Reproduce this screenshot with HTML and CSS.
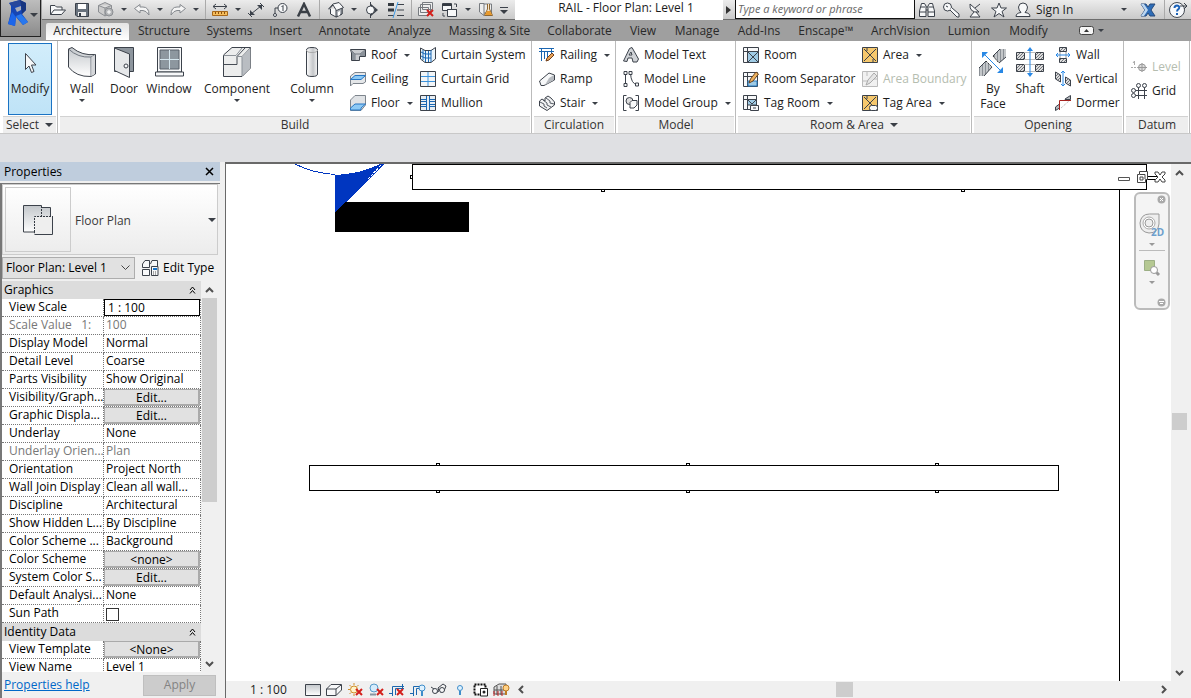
FILE: index.html
```html
<!DOCTYPE html>
<html lang="en">
<head>
<meta charset="utf-8">
<title>RAIL - Floor Plan: Level 1</title>
<link rel="stylesheet" href="styles.css">
</head>
<body>
<svg class="defs" aria-hidden="true">
  <defs>
    <linearGradient id="metal" x1="0" y1="0" x2="0" y2="1"><stop offset="0" stop-color="#c3c7cb"/><stop offset="1" stop-color="#fff"/></linearGradient>
    <linearGradient id="round" x1="0" y1="0" x2="1" y2="0"><stop offset="0" stop-color="#fff"/><stop offset=".6" stop-color="#c4c6c9"/><stop offset="1" stop-color="#f5f5f5"/></linearGradient>
    <pattern id="hatch" width="3" height="3" patternUnits="userSpaceOnUse"><rect width="3" height="3" fill="#ddd"/><path d="M0 3L3 0" stroke="#555b62" stroke-width=".8"/></pattern>
    <pattern id="bars" width="3" height="3" patternUnits="userSpaceOnUse"><rect width="3" height="3" fill="#c4c7ca"/><path d="M1.500 0V3" stroke="#8b9096"/></pattern>
  </defs>
</svg>

<header class="top">
  <button class="app-button" aria-label="Application menu">
    <svg width="28" height="30" viewBox="0 0 28 30"><path d="M3 3L14 0L20 3V10L16 14L22 22L17 25L10 17L9 26L2 24L5 12L5 6Z" fill="#1646b5"/><path d="M3 3L14 0L18 4L8 7Z" fill="#27479b"/><path d="M9 8L15 6V10L11 12Z" fill="#a9adb8"/><path d="M6 12L10 17L9 26L2 24Z" fill="#1c66ea"/><path d="M10 16L15 14L22 22L17 25Z" fill="#2878ee"/><path d="M14 0L20 3V10L16 14L15 5Z" fill="#17357f"/></svg>
    <i class="caret wide"></i>
  </button>
  <div class="title-bar">
    <div class="qat">
      <button class="tool" aria-label="Open"><svg width="18" height="16" viewBox="0 0 18 16"><path d="M1.500 12.500V3.500H6L7.500 5H13V8M1.500 12.500L5 8H16.500L12.500 12.500Z" class="ln fw"/></svg></button>
      <button class="tool" aria-label="Save"><svg width="16" height="16" viewBox="0 0 16 16"><path d="M1.500 1.500H14.500V14.500H3L1.500 13Z" fill="#68717c" class="ln"/><path d="M4 2H12V7H4Z" fill="#fff"/><path d="M4 10H12V14H4Z" fill="#eee"/><path d="M5 11H7V14H5Z" fill="#333b45"/></svg></button>
      <button class="tool" aria-label="Synchronize"><svg width="18" height="17" viewBox="0 0 18 17"><path d="M1.500 4.500L8 1.500L14.500 4.500V11L8 15L1.500 11ZM1.500 4.500L8 7L14.500 4.500M8 7V15" fill="#ccc" stroke="#8b8e92"/><circle cx="12" cy="11" r="4" fill="#b4b6b8" stroke="#8b8e92"/><path d="M10 11H14M12 9V13" stroke="#fff"/></svg></button>
      <button class="drop" aria-label="Synchronize options"><i class="caret"></i></button>
      <button class="tool" aria-label="Undo"><svg width="18" height="14" viewBox="0 0 18 14"><path d="M1.500 5.500L7 1.500V4H10Q16 4 16 12Q13 7.500 10 7.500H7V10Z" fill="#f4f4f4" stroke="#85898e"/></svg></button>
      <button class="drop" aria-label="Undo history"><i class="caret"></i></button>
      <button class="tool" aria-label="Redo"><svg width="18" height="14" viewBox="0 0 18 14"><path d="M16.500 5.500L11 1.500V4H8Q2 4 2 12Q5 7.500 8 7.500H11V10Z" fill="#f4f4f4" stroke="#85898e"/></svg></button>
      <button class="drop" aria-label="Redo history"><i class="caret"></i></button>
      <span class="sep"></span>
      <button class="tool" aria-label="Measure"><svg width="18" height="14" viewBox="0 0 18 14"><path d="M2 3.500H16M5 1L2 3.500L5 6M13 1L16 3.500L13 6" class="ln"/><path d="M1.500 8.500H16.500V12.500H1.500Z" fill="#f5bd5c" stroke="#a8681a"/><path d="M4.500 9V11M7.500 9V11M10.500 9V11M13.500 9V11" stroke="#8a5010"/></svg></button>
      <button class="drop" aria-label="Measure options"><i class="caret"></i></button>
      <button class="tool" aria-label="Aligned Dimension"><svg width="18" height="16" viewBox="0 0 18 16"><path d="M4 12L14 4" class="ln"/><path d="M3 8V13H8ZM10 3H15V8Z" fill="#3c424b"/><path d="M1 11L5 15M13 1L17 5" class="ln"/></svg></button>
      <button class="tool" aria-label="Tag by Category"><svg width="16" height="16" viewBox="0 0 16 16"><path d="M7 6H3V12" class="ln"/><circle cx="3" cy="13" r="1.500" class="ln fw"/><circle cx="10.500" cy="6" r="4.500" class="ln fw"/><path d="M9.500 5L11 3.500V9" class="ln"/></svg></button>
      <button class="tool" aria-label="Text"><svg width="16" height="16" viewBox="0 0 16 16"><path d="M2 14.500L8 2L14 14.500M5 10H11" fill="none" stroke="#3a3f46" stroke-width="2.500"/></svg></button>
      <span class="sep gap"></span>
      <button class="tool" aria-label="Default 3D View"><svg width="16" height="16" viewBox="0 0 16 16"><path d="M2.500 7V12L8 15L14 12V6" class="ln fw"/><path d="M8 8V15L14 12V5.500Z" fill="#aeb2b8" class="ln"/><path d="M.5 7L5 2L11 .5L15.500 5.500L8.500 8.500L5 3L1 7.500" class="ln fw"/><path d="M10 10L12 9V13L10 14Z" fill="#fff"/></svg></button>
      <button class="drop" aria-label="3D options"><i class="caret"></i></button>
      <button class="tool" aria-label="Section"><svg width="16" height="16" viewBox="0 0 16 16"><path d="M7 2L14 8L7 14Z" fill="#3d434b"/><circle cx="6.500" cy="8" r="4" class="ln fw"/><path d="M6.500 0V4M6.500 12V16" class="ln"/></svg></button>
      <button class="tool" aria-label="Thin Lines"><svg width="18" height="16" viewBox="0 0 18 16"><path d="M1 2.500H7M1 8H7" stroke="#333940" stroke-width="3"/><path d="M1 13.500H7M10 2.500H17M10 8H17M10 13.500H17" class="ln"/><path d="M6 16L11 0" stroke="#3c9be8"/></svg></button>
      <span class="sep"></span>
      <button class="tool" aria-label="Close Hidden Windows"><svg width="18" height="17" viewBox="0 0 18 17"><path d="M5.500 1.500H15.500V8.500H5.500ZM3.500 3.500H13.500V11.500H3.500ZM1.500 6.500H11.500V14.500H1.500Z" fill="#eee" stroke="#777b80"/><path d="M10 9L16 15M16 9L10 15" class="redx"/></svg></button>
      <button class="tool" aria-label="Switch Windows"><svg width="18" height="16" viewBox="0 0 18 16"><path d="M1.500 1.500H10.500V8.500H1.500Z" class="ln fw"/><path d="M1 3H11M6 8H16" stroke="#343a42" stroke-width="2"/><path d="M6.500 7.500H15.500V14.500H6.500ZM13 2H15.500V5M2 11V14H4" class="ln fw"/></svg></button>
      <button class="drop" aria-label="Switch list"><i class="caret"></i></button>
      <button class="tool" aria-label="User Interface"><svg width="18" height="16" viewBox="0 0 18 16"><path d="M2.500 1.500H7V13.500L2.500 10ZM7 2H14.500V11H7" fill="#eee" stroke="#777b80"/><path d="M10.500 2V7L7.500 13.500H15.500L12.500 7V2" fill="#f6e6cc" stroke="#8d6530"/><path d="M10 9H13L15 13H8Z" fill="#e99a2c"/></svg></button>
      <button class="drop" aria-label="Customize toolbar"><svg width="8" height="8" viewBox="0 0 8 8"><path d="M0 1.500H8" class="ln"/><path d="M0 4H8L4 8Z" fill="#3a3f46"/></svg></button>
    </div>
    <h1 class="doc-title">RAIL - Floor Plan: Level 1</h1>
    <button class="search-toggle" aria-label="Collapse search"><i class="caret side"></i></button>
    <input class="search" type="text" aria-label="Search" placeholder="Type a keyword or phrase">
    <div class="info">
      <button class="tool" aria-label="Search help"><svg width="18" height="16" viewBox="0 0 18 16"><path d="M3.500 1.500H6.500L8 4V14.500H1.500V9ZM14.500 1.500H11.500L10 4V14.500H16.500V9ZM8 5H10M8 8H10M1.500 10H8M10 10H16.500M3 5H7M11 5H15" class="ln fw"/></svg></button>
      <button class="tool" aria-label="Subscription"><svg width="18" height="16" viewBox="0 0 18 16"><circle cx="5.500" cy="5" r="4" class="ln fw"/><path d="M8 8L15 15H17V12L9.500 5.500M4 4L6 5" class="ln fw"/></svg></button>
      <button class="tool" aria-label="Communication Center"><svg width="16" height="16" viewBox="0 0 16 16"><path d="M3 2Q2 11 12 10ZM8 6L13 2M7 10L3 15H13L9 10" class="ln fw"/></svg></button>
      <button class="tool" aria-label="Favorites"><svg width="16" height="16" viewBox="0 0 16 16"><path d="M8 1L10 6H15.500L11 9.500L13 15L8 11.500L3 15L5 9.500L.5 6H6Z" class="ln fw"/></svg></button>
      <button class="tool" aria-label="Account"><svg width="16" height="16" viewBox="0 0 16 16"><path d="M1 14.500Q1 11 6 10.500Q3.500 8 3.500 5Q4 1 8 1Q12 1 12.500 5Q12.500 8 10 10.500Q15 11 15 14.500Z" class="ln fw"/></svg></button>
      <button class="sign-in">Sign In</button>
    </div>
    <div class="info end">
      <button class="drop" aria-label="Account options"><i class="caret"></i></button>
      <button class="tool" aria-label="Exchange"><svg width="16" height="14" viewBox="0 0 16 14"><path d="M1 1H6L8 4L10 1H15L11 7L15 13H10L8 10L6 13H1L5 7Z" fill="#2e6db8" stroke="#284b7a"/><path d="M1 1H4L8 7L4 13H1L5 7Z" fill="#bcd6f0"/></svg></button>
      <span class="sep"></span>
      <button class="tool" aria-label="Help"><svg width="20" height="18" viewBox="0 0 20 18"><circle cx="9" cy="9" r="7.500" fill="#f7f9fc" stroke="#454b53"/><path d="M6.500 7Q6.500 4.500 9 4.500Q12 5 11 7.500Q9 9 9 10.500M9 12V14" fill="none" stroke="#1b62b8" stroke-width="2"/><path d="M12 5H19M16 2L19 5L16 8" class="ln"/></svg></button>
    </div>
  </div>
  <nav class="tabs" aria-label="Ribbon tabs">
    <button class="tab active">Architecture</button><button class="tab">Structure</button><button class="tab">Systems</button><button class="tab">Insert</button><button class="tab">Annotate</button><button class="tab">Analyze</button><button class="tab">Massing &amp; Site</button><button class="tab">Collaborate</button><button class="tab">View</button><button class="tab">Manage</button><button class="tab">Add-Ins</button><button class="tab">Enscape™</button><button class="tab">ArchVision</button><button class="tab">Lumion</button><button class="tab">Modify</button>
    <button class="minimize" aria-label="Minimize ribbon"><svg width="15" height="9" viewBox="0 0 15 9"><rect x=".5" y=".5" width="14" height="8" rx="2" fill="#f5f5f5" stroke="#444"/><path d="M5 6H10L7.500 3Z" fill="#333"/></svg><i class="caret"></i></button>
  </nav>
</header>

<section class="ribbon" aria-label="Architecture tools">
  <div class="panel p-select">
    <div class="body"><button class="big pressed"><svg width="20" height="30" viewBox="0 0 20 30"><path d="M5.500 5V21L9 17.500L11.500 24L14 23L11.500 16.500H16Z" class="ln fw"/></svg><span>Modify</span></button></div>
    <button class="foot">Select <i class="caret wide"></i></button>
  </div>
  <div class="panel p-build">
    <div class="body">
      <button class="big"><svg width="30" height="34" viewBox="0 0 30 34"><path d="M1.500 3L5 1.500Q15 10 28.500 8.500V28L24 30.500Q9 31 1.500 21Z" class="ln" fill="url(#metal)"/><path d="M1.500 3Q11 12 24 11L28.500 8.500M24 11V30.500" fill="none" stroke="#717780"/><path d="M24.500 11L28 9V28L24.500 30Z" fill="#d5d7da"/></svg><span>Wall</span><i class="caret"></i></button>
      <button class="big"><svg width="22" height="34" viewBox="0 0 22 34"><path d="M1.500 1.500H20.500V25.500H1.500Z" class="ln" fill="#8d959d"/><path d="M1.500 2L16.500 8V31.500L1.500 24.500Z" class="ln" fill="#e6e8ea"/><circle cx="13" cy="20" r="2" class="ln fw"/></svg><span>Door</span></button>
      <button class="big"><svg width="30" height="34" viewBox="0 0 30 34"><path d="M3.500 1.500H27.500V26H3.500Z" class="ln fw"/><path d="M6 4H25V23H6Z" fill="#8d979f" stroke="#59616a"/><path d="M15.500 4V23M6 13.500H25" stroke="#d5e6ee"/><path d="M1.500 26H29.500V30H1.500Z" class="ln fw"/></svg><span>Window</span></button>
      <button class="big"><svg width="30" height="34" viewBox="0 0 30 34"><path d="M1.500 9L10 1.500H28.500V22L20 30.500H1.500Z" class="ln" fill="#eceded"/><path d="M20 11L28.500 2V22L20 30Z" fill="#b9bdc2"/><path d="M1.500 22V18.500H15V10.500L23 2" fill="none" stroke="#464c55"/><path d="M1.500 9.500H14L20 2M15 10.500H20M20 10.500V30M20 10.500L28 2" fill="none" stroke="#8c9299"/></svg><span>Component</span><i class="caret"></i></button>
      <button class="big"><svg width="14" height="34" viewBox="0 0 14 34"><path d="M1.500 4Q1.500 1.500 7 1.500Q12.500 1.500 12.500 4V28Q12.500 30.500 7 30.500Q1.500 30.500 1.500 28Z" class="ln" fill="url(#round)"/><path d="M1.500 4Q1.500 6.500 7 6.500Q12.500 6.500 12.500 4" fill="none" stroke="#aaa"/></svg><span>Column</span><i class="caret"></i></button>
      <div class="stack">
        <button class="small"><svg class="ic" viewBox="0 0 16 16"><path d="M.5 2.500H15.500V9.500H9.500V13.500H1.500V6Z" fill="#c9ccd0" class="ln"/><path d="M1 3L5 7V13M5 7H10L15 3" fill="none" stroke="#737981"/><path d="M1 3L5 7V13H2V6ZM10 7L15 3V9H10Z" fill="#8b929a"/></svg>Roof<i class="caret"></i></button>
        <button class="small"><svg class="ic" viewBox="0 0 16 16"><path d="M.5 5L5 1.500H15.500V11L13 12.500H3L.5 15Z" fill="#e4e6e8" stroke="#7d848c"/><path d="M.5 8.500L5 4.500H15.500L11 8.500Z" fill="#8cc9f5" stroke="#2676c3"/></svg>Ceiling</button>
        <button class="small"><svg class="ic" viewBox="0 0 16 16"><path d="M.5 11V5L5 .5H15.500V10L11 15.500H.5Z" fill="#dfe2e5" stroke="#7d848c"/><path d="M.5 13L5 9H15.500L11 13V15H.5Z" fill="#8cc9f5" stroke="#2676c3"/></svg>Floor<i class="caret"></i></button>
      </div>
      <div class="stack">
        <button class="small"><svg class="ic" viewBox="0 0 16 16"><path d="M.5 1L5 3.500H11L15.500 .5V12L11 15.500H5L.5 12Z" fill="#eaf4fb" class="ln"/><path d="M1 5L5 7H11M1 9L5 11H11M3 3V13M5.500 4V15M8.500 4V15M11 3V15" fill="none" stroke="#1967b4"/></svg>Curtain System</button>
        <button class="small"><svg class="ic" viewBox="0 0 16 16"><path d="M.5 .5H15.500V15.500H.5Z" fill="#f3f5f7" class="ln"/><path d="M8 1V15M1 5.500H15M1 10.500H15" stroke="#3c93dc"/></svg>Curtain Grid</button>
        <button class="small"><svg class="ic" viewBox="0 0 16 16"><path d="M.5 .5H15.500V15.500H.5Z" fill="#e7edf2" class="ln"/><path d="M6.500 1V15M9.500 1V15M1 4.500H6M10 4.500H15M1 6.500H6M10 6.500H15M1 9.500H6M10 9.500H15M1 11.500H6M10 11.500H15" stroke="#1967b4"/></svg>Mullion</button>
      </div>
    </div>
    <div class="foot">Build</div>
  </div>
  <div class="panel p-circ">
    <div class="body"><div class="stack">
      <button class="small"><svg class="ic" viewBox="0 0 16 16"><path d="M0 1.500H15M0 4.500H15M2.500 2V14M5.500 5V12M8.500 5V12M12.500 2V10" fill="none" stroke="#1b66b1"/><path d="M7 14L8 11L13 6L15 8L10 13Z" fill="#e8a258" stroke="#71401c"/></svg>Railing<i class="caret"></i></button>
      <button class="small"><svg class="ic" viewBox="0 0 16 16"><path d="M.5 10L10 2L15.500 4V9L5 14.500H2Z" class="ln fw"/><path d="M10 7L15 4V9L6 14Z" fill="#b7bbc0"/></svg>Ramp</button>
      <button class="small"><svg class="ic" viewBox="0 0 16 16"><path d="M.5 6L3 4L6 6L6 3L9 1L12 3L15.500 7V10L8 15.500L.5 11Z" fill="#f1f2f3" class="ln"/><path d="M1 7L5 9V11L8 13M4 5L8 8V10L12 12M7 3L11 6V8L15 9" fill="none" stroke="#555b64"/></svg>Stair<i class="caret"></i></button>
    </div></div>
    <div class="foot">Circulation</div>
  </div>
  <div class="panel p-model">
    <div class="body"><div class="stack">
      <button class="small"><svg class="ic" viewBox="0 0 16 16"><path d="M.5 14L6.500 1.500L9 .5L15.500 12L14 15H10L9 11H5L4 14.500ZM6 8H9L8 5Z" fill="#cfd2d6" class="ln"/></svg>Model Text</button>
      <button class="small"><svg class="ic" viewBox="0 0 16 16"><path d="M2.500 2V14M7.500 2Q8 13 14 13.500" class="ln"/><path d="M1 .5H4V3.500H1ZM1 12.500H4V15.500H1ZM6 .5H9V3.500H6ZM12.500 12H15.500V15H12.500Z" class="ln fw"/></svg>Model Line</button>
      <button class="small"><svg class="ic" viewBox="0 0 16 16"><path d="M3.500 .5H.5V15.500H3.500M12.500 .5H15.500V15.500H12.500" class="ln"/><circle cx="6.500" cy="6" r="3.500" class="ln" fill="#ddd"/><path d="M7 7.500L9 5.500H14V10L11 13H7Z" class="ln fw"/></svg>Model Group<i class="caret"></i></button>
    </div></div>
    <div class="foot">Model</div>
  </div>
  <div class="panel p-room">
    <div class="body">
      <div class="stack">
        <button class="small"><svg class="ic" viewBox="0 0 16 16"><path d="M.5 .5H15.500V15.500H.5ZM4.500 1V15M1 4.500H4" class="ln fw"/><path d="M4.500 4.500H15.500V15.500H4.500Z" fill="#9fcbe5" class="ln"/><path d="M5 5L15 15M15 5L5 15" class="ln"/></svg>Room</button>
        <button class="small"><svg class="ic" viewBox="0 0 16 16"><path d="M.5 1.500H14.500V15.500H.5ZM4.500 2V15M1 5.500H14" class="ln fw"/><path d="M5 10H14V15H5Z" fill="#9fcbe5" stroke="#2377bd"/><path d="M6 12L7.500 8L13 1L15.500 3L10 10Z" fill="#efb35f" stroke="#68431f"/></svg>Room Separator</button>
        <button class="small"><svg class="ic" viewBox="0 0 16 16"><path d="M.5 .5H13.500V14.500H.5ZM4.500 1V15M1 4.500H4" class="ln fw"/><path d="M4.500 4.500H13.500V10H4.500Z" fill="#9fcbe5" class="ln"/><path d="M5 5L9 9M13 5L9 9" class="ln"/><path d="M7.500 10.500H15.500V15.500H7.500ZM10 13H13" class="ln fw"/></svg>Tag Room<i class="caret"></i></button>
      </div>
      <div class="stack">
        <button class="small"><svg class="ic" viewBox="0 0 16 16"><path d="M.5 .5H15.500V15.500H.5Z" fill="#f6c86d" class="ln"/><path d="M2 2L14 14M14 2L2 14M5 1V4M11 12V15" class="ln"/></svg>Area<i class="caret"></i></button>
        <button class="small" disabled><svg class="ic" viewBox="0 0 16 16"><path d="M.5 .5H15.500V15.500H.5ZM1 10H7M10 8H15M5 1V5" fill="#f1f1f1" stroke="#bbb"/><path d="M4 14L6 9L12 2L15 5L8 12Z" fill="#e5e5e5" stroke="#aaa"/></svg>Area Boundary</button>
        <button class="small"><svg class="ic" viewBox="0 0 16 16"><path d="M.5 .5H15.500V15.500H.5Z" fill="#f6c86d" class="ln"/><path d="M2 2L12 12M14 2L2 14M5 1V4" class="ln"/><rect x="7.500" y="10.500" width="8" height="5" rx="2" class="ln fw"/></svg>Tag Area<i class="caret"></i></button>
      </div>
    </div>
    <button class="foot">Room &amp; Area <i class="caret wide"></i></button>
  </div>
  <div class="panel p-open">
    <div class="body">
      <button class="big two"><svg width="30" height="34" viewBox="0 0 30 34"><path d="M15 10L22 3H28V11L21 17ZM1 22L8 15L14 21L6 30H1Z" fill="url(#bars)"/><path d="M15 10L22 3M28 11L21 17M1 22L8 15M14 21L6 30" class="ln"/><path d="M15 10L21 17M8 15L14 21" stroke="#333" stroke-dasharray="2 1"/><path d="M6 8L23 25" stroke="#2888e5"/><path d="M4 6H10L4 12ZM25 27H19L25 21Z" fill="#2888e5"/></svg><span>By<br>Face</span></button>
      <button class="big"><svg width="30" height="34" viewBox="0 0 30 34"><path d="M1.500 6.500H9.500V13.500H1.500ZM20.500 6.500H28.500V13.500H20.500ZM1.500 18.500H9.500V25.500H1.500ZM20.500 18.500H28.500V25.500H20.500Z" fill="url(#hatch)" class="ln"/><path d="M9 6.500H21M9 13.500H21M9 18.500H21M9 25.500H21" stroke="#bbb"/><path d="M15 4V28" stroke="#2888e5"/><path d="M12 5L15 1L18 5ZM12 27L15 31L18 27Z" fill="#2888e5"/></svg><span>Shaft</span></button>
      <div class="stack">
        <button class="small"><svg class="ic" viewBox="0 0 16 16"><path d="M4.500 .5H11.500V4.500H4.500ZM4.500 11.500H11.500V15.500H4.500Z" fill="url(#hatch)" class="ln"/><path d="M5 5V11M11 5V11" stroke="#999"/><path d="M1 8H15M3 6L1 8L3 10M13 6L15 8L13 10" fill="none" stroke="#2888e5"/></svg>Wall</button>
        <button class="small"><svg class="ic" viewBox="0 0 16 16"><path d="M.5 1L5.500 4V11L.5 8ZM10.500 6L15.500 9V15L10.500 12Z" fill="url(#hatch)" class="ln"/><path d="M8 0V15M6 2L8 0L10 2M6 13L8 15L10 13" fill="none" stroke="#2888e5"/></svg>Vertical</button>
        <button class="small"><svg class="ic" viewBox="0 0 16 16"><path d="M.5 12L4.500 9V13L.5 15.500ZM10 4L15.500 .5V4.500H10Z" fill="#b5b9be" class="ln"/><path d="M4.500 15V5.500H16" fill="none" stroke="#a52320"/><path d="M6 13L14 6" stroke="#aaa" stroke-dasharray="1 1"/></svg>Dormer</button>
      </div>
    </div>
    <div class="foot">Opening</div>
  </div>
  <div class="panel p-datum">
    <div class="body"><div class="stack">
      <button class="small" disabled><svg class="ic" viewBox="0 0 16 16"><path d="M0 8.500H7" stroke="#aaa" stroke-dasharray="2 1"/><path d="M2 4L3.500 2V6" fill="none" stroke="#aaa"/><circle cx="11" cy="8.500" r="3.500" fill="#ddd" stroke="#999"/><path d="M11 4V13M7 8.500H16" stroke="#999"/></svg>Level</button>
      <button class="small"><svg class="ic" viewBox="0 0 16 16"><path d="M4 7.500H16M4 12.500H16M7.500 4V16M13.500 4V16" class="ln"/><circle cx="7.500" cy="2.500" r="2" class="ln fw"/><circle cx="13.500" cy="2.500" r="2" class="ln fw"/><circle cx="2.500" cy="7.500" r="2" class="ln fw"/><circle cx="2.500" cy="12.500" r="2" class="ln fw"/></svg>Grid</button>
    </div></div>
    <div class="foot">Datum</div>
  </div>
</section>

<main class="workspace">
  <aside class="properties">
    <header class="prop-head"><h2>Properties</h2><button aria-label="Close properties"><svg width="9" height="9" viewBox="0 0 9 9"><path d="M1 1L8 8M8 1L1 8" stroke="#000" stroke-width="1.500"/></svg></button></header>
    <div class="prop-body">
      <button class="type-selector">
        <span class="thumb"><svg width="32" height="32" viewBox="0 0 32 32"><path d="M1.500 1.500H19.500V3.500H28.500V29H12.500V28H1.500Z" fill="url(#metal)" class="ln"/><path d="M13 13H30V30H13Z" fill="#eee"/><path d="M19.500 2V12.500M12.500 28V12.500H29" fill="none" stroke="#343a42" stroke-dasharray="2 1"/><path d="M12.500 30.500H30.500V12" class="ln"/></svg></span>
        <span class="type-name">Floor Plan</span><i class="caret wide"></i>
      </button>
      <div class="instance">
        <select aria-label="Instance"><option>Floor Plan: Level 1</option></select>
        <button class="edit-type"><svg width="17" height="16" viewBox="0 0 17 16"><path d="M.5 4L3 .5H7.500V7.500H.5ZM8.500 4L10 .5H15.500V6M.5 9.500H7.500V15.500H.5ZM9.500 6.500H16V15.500H9.500Z" class="ln fw"/><path d="M11 8H15V10H11Z" fill="#1773c8"/><path d="M11 12H15M11 14H15" stroke="#555" stroke-dasharray="1 1"/></svg>Edit Type</button>
      </div>
      <div class="grid-area">
        <div class="table-clip">
        <table>
          <colgroup><col class="name-col"><col></colgroup>
          <tbody>
          <tr class="group"><th colspan="2"><div>Graphics<svg width="7" height="8" viewBox="0 0 7 8"><path d="M1 4L3.500 1L6 4M1 7.500L3.500 4.500L6 7.500" fill="none" stroke="#000"/></svg></div></th></tr>
          <tr><th><label for="scale">View Scale</label></th><td class="flush"><input id="scale" type="text" value="1 : 100"></td></tr>
          <tr class="dim"><th>Scale Value &nbsp; 1:</th><td>100</td></tr>
          <tr><th>Display Model</th><td>Normal</td></tr>
          <tr><th>Detail Level</th><td>Coarse</td></tr>
          <tr><th>Parts Visibility</th><td>Show Original</td></tr>
          <tr><th>Visibility/Graph...</th><td class="flush"><button>Edit...</button></td></tr>
          <tr><th>Graphic Displa...</th><td class="flush"><button>Edit...</button></td></tr>
          <tr><th>Underlay</th><td>None</td></tr>
          <tr class="dim"><th>Underlay Orien...</th><td>Plan</td></tr>
          <tr><th>Orientation</th><td>Project North</td></tr>
          <tr><th>Wall Join Display</th><td>Clean all wall...</td></tr>
          <tr><th>Discipline</th><td>Architectural</td></tr>
          <tr><th>Show Hidden L...</th><td>By Discipline</td></tr>
          <tr><th>Color Scheme ...</th><td>Background</td></tr>
          <tr><th>Color Scheme</th><td class="flush"><button>&lt;none&gt;</button></td></tr>
          <tr><th>System Color S...</th><td class="flush"><button>Edit...</button></td></tr>
          <tr><th>Default Analysi...</th><td>None</td></tr>
          <tr><th><label for="sun">Sun Path</label></th><td class="flush"><input id="sun" type="checkbox"></td></tr>
          <tr class="group"><th colspan="2"><div>Identity Data<svg width="7" height="8" viewBox="0 0 7 8"><path d="M1 4L3.500 1L6 4M1 7.500L3.500 4.500L6 7.500" fill="none" stroke="#000"/></svg></div></th></tr>
          <tr><th>View Template</th><td class="flush"><button>&lt;None&gt;</button></td></tr>
          <tr><th>View Name</th><td>Level 1</td></tr>
          </tbody>
        </table>
        </div>
        <div class="vscroll"><svg width="9" height="6" viewBox="0 0 9 6"><path d="M1 5L4.500 1.500L8 5" class="chev"/></svg><div class="track"><span class="prop-thumb"></span></div><svg width="9" height="6" viewBox="0 0 9 6"><path d="M1 1L4.500 4.500L8 1" class="chev"/></svg></div>
      </div>
      <footer class="prop-foot"><a href="#help">Properties help</a><button disabled>Apply</button></footer>
    </div>
  </aside>

  <section class="view" aria-label="Floor plan view">
    <div class="canvas">
      <svg class="drawing" shape-rendering="crispEdges">
        <rect x="109" y="38" width="134" height="30"/>
        <path d="M109 11Q134 10 154 0H158L120 38L109 48Z" fill="#0036c0"/>
        <path d="M69 0Q86 9 109 10.500" fill="none" stroke="#0036c0"/>
        <path d="M142 15L156 0" fill="none" stroke="#fff" stroke-dasharray="3 1"/>
        <g fill="#fff" stroke="#000">
          <path d="M893.500 25V520" />
          <rect x="186.500" y=".5" width="734" height="25"/>
          <rect x="83.500" y="301.500" width="749" height="25"/>
          <path d="M184.500 11.500H186.500V14.500H184.500ZM375.500 25.500H378.500V27.500H375.500ZM735.500 25.500H738.500V27.500H735.500Z"/>
          <path d="M210.500 299.500H213.500V301.500H210.500ZM460.500 299.500H463.500V301.500H460.500ZM709.500 299.500H712.500V301.500H709.500ZM210.500 326.500H213.500V328.500H210.500ZM460.500 326.500H463.500V328.500H460.500ZM709.500 326.500H712.500V328.500H709.500Z"/>
          <path d="M921 12.500H931V15.500H921Z"/>
        </g>
      </svg>
      <div class="window-buttons">
        <button aria-label="Minimize view"><svg width="12" height="14" viewBox="0 0 12 14"><path d="M.5 7.500H11.500V10.500H.5Z" fill="#fff" stroke="#555"/></svg></button>
        <button aria-label="Restore view"><svg width="12" height="14" viewBox="0 0 12 14"><path d="M3.500 1.500H11.500V9.500H9.500V12.500H1.500V4.500H3.500Z" fill="#fff" stroke="#444"/><path d="M4 7H7V10H4Z" fill="#fff" stroke="#444"/><path d="M4 4.500H9V9" fill="none" stroke="#444"/></svg></button>
        <button aria-label="Close view"><svg width="12" height="14" viewBox="0 0 12 14"><path d="M1 2H4L6 5L8 2H11V4L8 7L11 10V12H8L6 9L4 12H1V10L4 7L1 4Z" fill="#fff" stroke="#444"/></svg></button>
      </div>
      <div class="nav-bar">
        <button class="nav-end" aria-label="Close navigation bar"><svg width="9" height="9" viewBox="0 0 9 9"><circle cx="4.500" cy="4.500" r="4" fill="#aaa"/><path d="M3 3L6 6M6 3L3 6" stroke="#fff"/></svg></button>
        <button class="nav-tool" aria-label="Steering wheel 2D"><svg width="28" height="26" viewBox="0 0 28 26"><path d="M11.500 1H21V11Q20 20 11 20Q2 19 2 10Q3 1 11.500 1Z" fill="#eee" stroke="#999"/><circle cx="11" cy="10" r="6" fill="#fff" stroke="#aaa"/><circle cx="11" cy="10" r="4" fill="#eee" stroke="#999"/><text x="13" y="23" class="wheel-label">2D</text></svg></button>
        <i class="caret pale"></i>
        <hr>
        <button class="nav-tool" aria-label="Zoom in region"><svg width="18" height="18" viewBox="0 0 18 18"><path d="M1.500 1.500H11.500V11.500H1.500Z" fill="#b5c892" stroke="#9caf85"/><path d="M12 12L16 16" stroke="#999" stroke-width="3"/><circle cx="11" cy="11" r="3.500" fill="#fff" stroke="#999"/></svg></button>
        <i class="caret pale"></i>
        <button class="nav-end low" aria-label="Navigation bar options"><svg width="9" height="9" viewBox="0 0 9 9"><circle cx="4.500" cy="4.500" r="4" fill="#aaa"/><path d="M2 3.500H7M3 5.500H6" stroke="#fff"/></svg></button>
      </div>
    </div>
    <div class="vscroll view-v"><svg width="9" height="6" viewBox="0 0 9 6"><path d="M1 5L4.500 1.500L8 5" class="chev"/></svg><div class="track"><span class="view-thumb"></span></div><svg width="9" height="6" viewBox="0 0 9 6"><path d="M1 1L4.500 4.500L8 1" class="chev"/></svg></div>
    <div class="view-foot">
      <div class="view-control">
        <button class="scale">1 : 100</button>
        <button aria-label="Detail level"><svg width="16" height="12" viewBox="0 0 16 12"><path d="M.5 .5H15.500V11.500H.5Z" fill="url(#metal)" class="ln"/></svg></button>
        <button aria-label="Visual style"><svg width="16" height="14" viewBox="0 0 16 14"><path d="M.5 6L5 1.500H15.500V7L10 12.500H.5ZM.5 6H10V12.500M10 6L15 2" class="ln fw"/></svg></button>
        <button aria-label="Sun path off"><svg width="16" height="14" viewBox="0 0 16 14"><circle cx="7" cy="6.500" r="3.500" fill="#fff4cb" stroke="#d18f29"/><path d="M7 0V2M7 11V13M1 6.500H3M2.500 2L4 3.500M11.500 2L10 3.500M2.500 11L4 9.500" stroke="#d18f29"/><path d="M9 6L15 12M15 6L9 12" class="redx"/></svg></button>
        <button aria-label="Shadows off"><svg width="16" height="14" viewBox="0 0 16 14"><circle cx="6" cy="5" r="4" fill="#d6ecfc" stroke="#579ac9"/><path d="M2 11.500H8" stroke="#8795a1" stroke-width="2"/><path d="M9 6L15 12M15 6L9 12" class="redx"/></svg></button>
        <button aria-label="Crop view off"><svg width="16" height="14" viewBox="0 0 16 14"><path d="M0 10.500H3M3.500 13V3.500H15M6.500 12V5.500H15M13.500 1V6" fill="none" stroke="#1c68ae"/><path d="M8 6L14 12M14 6L8 12" class="redx"/></svg></button>
        <button aria-label="Show crop region"><svg width="16" height="14" viewBox="0 0 16 14"><path d="M0 10.500H3M3.500 13V3.500H11M6.500 12V5.500H10" fill="none" stroke="#1c68ae"/><circle cx="12" cy="5" r="3" fill="#dff2ff" stroke="#3e8dca"/><path d="M12 8V13" stroke="#3e8dca" stroke-width="2"/></svg></button>
        <button aria-label="Temporary hide"><svg width="17" height="14" viewBox="0 0 17 14"><path d="M1 4L4 6L6 10L9 8L8 5L13 1L16 3L14 8L10 9" class="ln"/><circle cx="5" cy="8" r="2.500" class="ln fw"/><circle cx="12" cy="7" r="2.500" class="ln fw"/></svg></button>
        <button aria-label="Reveal hidden"><svg width="16" height="14" viewBox="0 0 16 14"><circle cx="8" cy="5" r="2.500" fill="#dff2ff" stroke="#3e8dca"/><path d="M8 8V12" stroke="#3e8dca" stroke-width="2"/></svg></button>
        <button aria-label="Temporary view properties"><svg width="16" height="14" viewBox="0 0 16 14"><path d="M1.500 1.500H12.500V11.500H1.500Z" fill="#fff" stroke="#111" stroke-width="2" stroke-dasharray="2 1"/><path d="M7.500 5.500H14.500V13H7.500Z" fill="#fff" stroke="#222"/><circle cx="11" cy="9" r="1.500" fill="#222"/></svg></button>
        <button aria-label="Analytical model"><svg width="17" height="14" viewBox="0 0 17 14"><path d="M1 4L6 1H13V11H1ZM1 7H12M4 3V12M8 3V12" fill="#ddd" stroke="#555"/><path d="M1 8V13M5 8V13M9 8V13" stroke="#c42222"/><circle cx="13" cy="5" r="3" fill="#ffd287" stroke="#be7c25"/><path d="M13 8V12" stroke="#be7c25" stroke-width="2"/></svg></button>
      </div>
      <div class="hscroll"><svg width="6" height="9" viewBox="0 0 6 9"><path d="M5 1L1.500 4.500L5 8" class="chev"/></svg><div class="htrack"><span></span></div><svg width="6" height="9" viewBox="0 0 6 9"><path d="M1 1L4.500 4.500L1 8" class="chev"/></svg></div>
    </div>
  </section>
</main>
</body>
</html>
```

FILE: styles.css
```css
* { box-sizing: border-box; }
body {
  margin: 0;
  height: 100vh;
  display: flex;
  flex-direction: column;
  overflow: hidden;
  background: #dfe0e3;
  color: #1c1c1c;
  font: 12px/16px "Open Sans", "Noto Sans", sans-serif;
  white-space: nowrap;
}
button, input, select { font: inherit; color: inherit; }
button { border: 0; padding: 0; margin: 0; background: none; }
svg { display: block; flex: none; }
.defs { position: absolute; width: 0; height: 0; }
.ln { stroke: #3c424b; }
.ln:not([fill]) { fill: none; }
.fw.fw:not([fill]) { fill: #f7f8f9; }
.chev { fill: none; stroke: #505050; stroke-width: 2; }
.redx { stroke: #d3201c; stroke-width: 2; }

.caret {
  flex: none;
  border: solid transparent;
  border-width: 3px 3px 0;
  border-top-color: #3a3f46;
}
.caret.wide { border-width: 4px 4px 0; }
.caret.side { border-width: 4px 0 4px 5px; border-color: transparent transparent transparent #333; }
.caret.pale { border-top-color: #999; }

/* Title bar and tabs */
.top {
  display: grid;
  grid-template-columns: 42px minmax(0, 1fr);
  grid-template-rows: 20px 20px;
  background: #9f9f9f;
}
.app-button {
  grid-row: 1 / 3;
  height: 37px;
  width: 41px;
  display: flex;
  align-items: center;
  padding: 0 0 7px 5px;
  border: 1px solid #222;
  border-top: 0;
  background: linear-gradient(#bdbdbd, #8b8b8b);
}
.app-button .caret { margin-left: -4px; }
.title-bar {
  display: flex;
  min-width: 0;
  border-bottom: 1px solid #6d6d6d;
  background: linear-gradient(#ececec, #c9c9c9);
}
.qat { display: flex; align-items: center; padding-left: 4px; width: 473px; flex: none; }
.tool { width: 24px; height: 17px; display: flex; align-items: center; justify-content: center; flex: none; }
.drop { width: 12px; height: 17px; display: flex; align-items: center; justify-content: center; flex: none; }
.sep { width: 1px; height: 19px; margin: 0 2px 0 3px; background: #aaa; flex: none; }
.sep.gap { margin-right: 4px; }
.doc-title {
  flex: 1 1 208px;
  max-width: 208px;
  height: 20px;
  margin: 0;
  padding-left: 14px;
  background: #fff;
  text-align: center;
  font-size: 12px;
  font-weight: 400;
  line-height: 16px;
}
.search-toggle { width: 12px; padding-left: 3px; flex: none; }
.search-toggle .caret { display: block; width: 0; }
.search {
  flex: 0 1 180px;
  min-width: 0;
  height: 19px;
  padding: 0 2px 2px;
  border: 1px solid #111;
  border-top: 0;
  border-radius: 0;
  background: #fff;
}
.search::placeholder { color: #666; font-style: italic; font-size: 11px; }
.info { display: flex; align-items: center; }
.info.end { margin-left: auto; }
.sign-in { padding-left: 1px; }
.info.end .drop { width: 14px; justify-content: flex-start; }
.info.end .sep { margin-right: 0; }
.info.end .tool { width: 26px; }
.tabs {
  display: grid;
  grid-template-columns: 85px 68px 63px 49px 69px 61px 99px 81px 46px 62px 62px 72px 77px 60px 59px auto;
  justify-content: start;
  padding-left: 3px;
  color: #292929;
}
.tab { display: flex; justify-content: center; padding-top: 3px; }
.tab.active {
  margin: 3px 1px 0;
  padding-top: 0;
  border-radius: 2px 2px 0 0;
  background: linear-gradient(#e4e4e4, #fff);
}
.minimize { display: flex; align-items: center; gap: 4px; padding-left: 21px; }

/* Ribbon */
.ribbon {
  display: flex;
  gap: 2px;
  padding: 0 3px;
  flex: none;
  background: #fff;
  border-top: 1px solid #9f9f9f;
  border-bottom: 1px solid #c8c8c8;
}
.panel { display: flex; flex-direction: column; flex: none; border-right: 1px solid #bbb; }
.p-select { width: 55px; }
.p-build { width: 472px; }
.p-circ { width: 82px; }
.p-model { width: 118px; }
.p-room { width: 234px; }
.p-open { width: 150px; }
.p-datum { width: 64px; }
.body { display: grid; height: 75px; padding-top: 2px; align-items: start; justify-content: start; }
.p-select .body { grid-template-columns: 44px; padding-left: 5px; }
.p-build .body { grid-template-columns: 42px 42px 48px 88px 69px 70px auto; padding-left: 1px; }
.p-build .big:nth-child(5) { padding-right: 7px; }
.p-circ .body, .p-model .body, .p-datum .body { padding-left: 5px; }
.p-datum .body { padding-top: 14px; }
.p-room .body { grid-template-columns: 119px auto; padding-left: 5px; }
.p-open .body { grid-template-columns: 36px 38px auto; padding-left: 1px; }
.p-open .stack { padding-left: 6px; }
.foot {
  height: 17px;
  margin-right: 1px;
  display: flex;
  align-items: center;
  justify-content: center;
  gap: 6px;
  border-top: 1px solid #d2d2d2;
  background: #eee;
  color: #333;
}
.big { display: flex; flex-direction: column; align-items: center; height: 72px; padding-top: 3px; text-align: center; }
.big span { margin-top: 1px; line-height: 15px; }
.big .caret { margin-top: 3px; }
.big:not(.pressed) svg { height: 34px; }
.big.pressed { border: 1px solid #1a73c4; background: linear-gradient(#d2edfb, #bfe3f7); }
.big.pressed svg { height: 33px; }
.stack { display: flex; flex-direction: column; }
.small { display: flex; align-items: center; gap: 5px; height: 24px; }
.small .caret { margin-left: 2px; }
.small:disabled { color: #b5bdb0; }
.ic { width: 16px; height: 16px; }

/* Workspace */
.workspace { display: flex; flex: 1; min-height: 0; margin-top: 28px; background: #f0f0f0; }
.properties { width: 225px; flex: none; display: flex; flex-direction: column; padding-right: 5px; color: #000; }
.prop-head { display: flex; justify-content: space-between; align-items: center; height: 19px; padding: 0 6px 0 4px; background: #bfcddd; flex: none; }
.prop-head h2 { margin: 0; font-size: 12px; font-weight: 400; }
.prop-body {
  flex: 1;
  min-height: 0;
  margin-top: 2px;
  display: flex;
  flex-direction: column;
  border: solid #777;
  border-width: 1px 0 0 2px;
}
.type-selector {
  display: flex;
  align-items: center;
  height: 71px;
  margin-right: 2px;
  padding: 2px;
  border: 1px solid #ccc;
  background: linear-gradient(#fff, #ececec);
  color: #3b3b3b;
  flex: none;
}
.thumb { width: 66px; height: 65px; display: flex; align-items: center; justify-content: center; border: 1px solid #ccc; }
.type-name { padding: 2px 0 0 4px; flex: 1; text-align: left; }
.type-selector .caret { margin-right: -1px; }
.instance { display: flex; align-items: center; height: 26px; gap: 7px; flex: none; }
.instance select {
  appearance: none;
  width: 133px;
  height: 22px;
  padding: 0 20px 0 3px;
  border: 1px solid #adadad;
  border-radius: 0;
  background: url("data:image/svg+xml,%3Csvg xmlns='http://www.w3.org/2000/svg' width='9' height='6'%3E%3Cpath d='M.5 .5L4.500 4.500L8.500 .5' fill='none' stroke='%23444'/%3E%3C/svg%3E") right 4px center no-repeat, #e1e1e1;
}
.edit-type { display: flex; align-items: center; gap: 4px; }
.grid-area { display: flex; flex: 1; min-height: 0; }
.table-clip { width: 199px; overflow: hidden; background: #fff; }
table { width: 100%; table-layout: fixed; border-collapse: separate; border-spacing: 0; }
.name-col { width: 102px; }
tr { height: 18px; }
th, td {
  height: 18px;
  padding: 0;
  border-bottom: 1px dotted #777;
  border-right: 1px dotted #777;
  text-align: left;
  vertical-align: top;
  font-weight: 400;
  line-height: 16px;
}
th { padding-left: 7px; }
td { padding-left: 2px; }
td.flush { padding: 0; }
.group th { padding: 0 5px 0 2px; background: #dcdcdc; border: 0; line-height: 18px; }
.group div { display: flex; justify-content: space-between; align-items: center; }
.dim { color: #777; }
td button { display: block; width: 100%; height: 17px; border: 1px solid #aaa; border-width: 1px 2px 2px 1px; background: #e1e1e1; line-height: 15px; }
td input[type="text"] { display: block; width: 100%; height: 17px; padding: 0 3px; border: 1px solid #000; border-radius: 0; background: #fff; }
td input[type="checkbox"] { appearance: none; display: block; width: 13px; height: 13px; margin: 3px 0 0 2px; border: 1px solid #333; background: #fff; }
.vscroll { width: 17px; display: flex; flex-direction: column; align-items: center; padding: 6px 0 5px; }
.track { flex: 1; width: 15px; margin: 5px 0; position: relative; }
.prop-thumb { display: block; height: 57%; background: #cdcdcd; }
.prop-foot { display: flex; justify-content: space-between; align-items: center; height: 26px; padding: 0 4px 0 2px; flex: none; }
.prop-foot a { color: #0068c8; }
.prop-foot button { width: 73px; height: 21px; border: 1px solid #bfbfbf; background: #ccc; color: #838383; }

/* Drawing view */
.view {
  flex: 1;
  min-width: 0;
  display: grid;
  grid-template-columns: minmax(0, 1fr) 17px 3px;
  grid-template-rows: minmax(0, 1fr) 17px;
  border: solid #696969;
  border-width: 2px 0 0 1px;
}
.canvas { position: relative; background: #fff; overflow: hidden; }
.drawing { width: 100%; height: 100%; }
.window-buttons { position: absolute; top: 6px; right: 5px; display: flex; gap: 6px; }
.nav-bar {
  position: absolute;
  top: 28px;
  right: 1px;
  width: 36px;
  height: 118px;
  display: flex;
  flex-direction: column;
  align-items: center;
  padding: 1px 2px;
  border: 2px solid #bbb;
  border-radius: 6px;
  background: #f4f4f4;
}
.nav-end { align-self: flex-end; }
.nav-tool { margin-top: 9px; }
.nav-bar .caret { margin-top: 4px; }
.nav-bar hr { width: 26px; margin: 4px 0 -1px; border: 0; border-top: 1px solid #bbb; }
.nav-bar .caret + .low { margin-top: auto; }
.wheel-label { font: bold 10px "Open Sans", sans-serif; fill: #6d9fcc; }
.view-thumb { position: absolute; top: 48%; width: 15px; height: 17px; background: #cdcdcd; }
.view-foot { grid-column: 1 / 4; display: flex; min-width: 0; }
.view-control { display: flex; align-items: center; padding-left: 24px; }
.view-control button { width: 21px; display: flex; justify-content: center; }
.view-control .scale { width: 52px; justify-content: flex-start; }
.hscroll { flex: 1; display: flex; align-items: center; padding: 0 24px 0 6px; gap: 6px; }
.htrack { flex: 1; height: 15px; }
.htrack span { display: block; width: 17px; height: 15px; margin-left: 49%; background: #cdcdcd; }
```
